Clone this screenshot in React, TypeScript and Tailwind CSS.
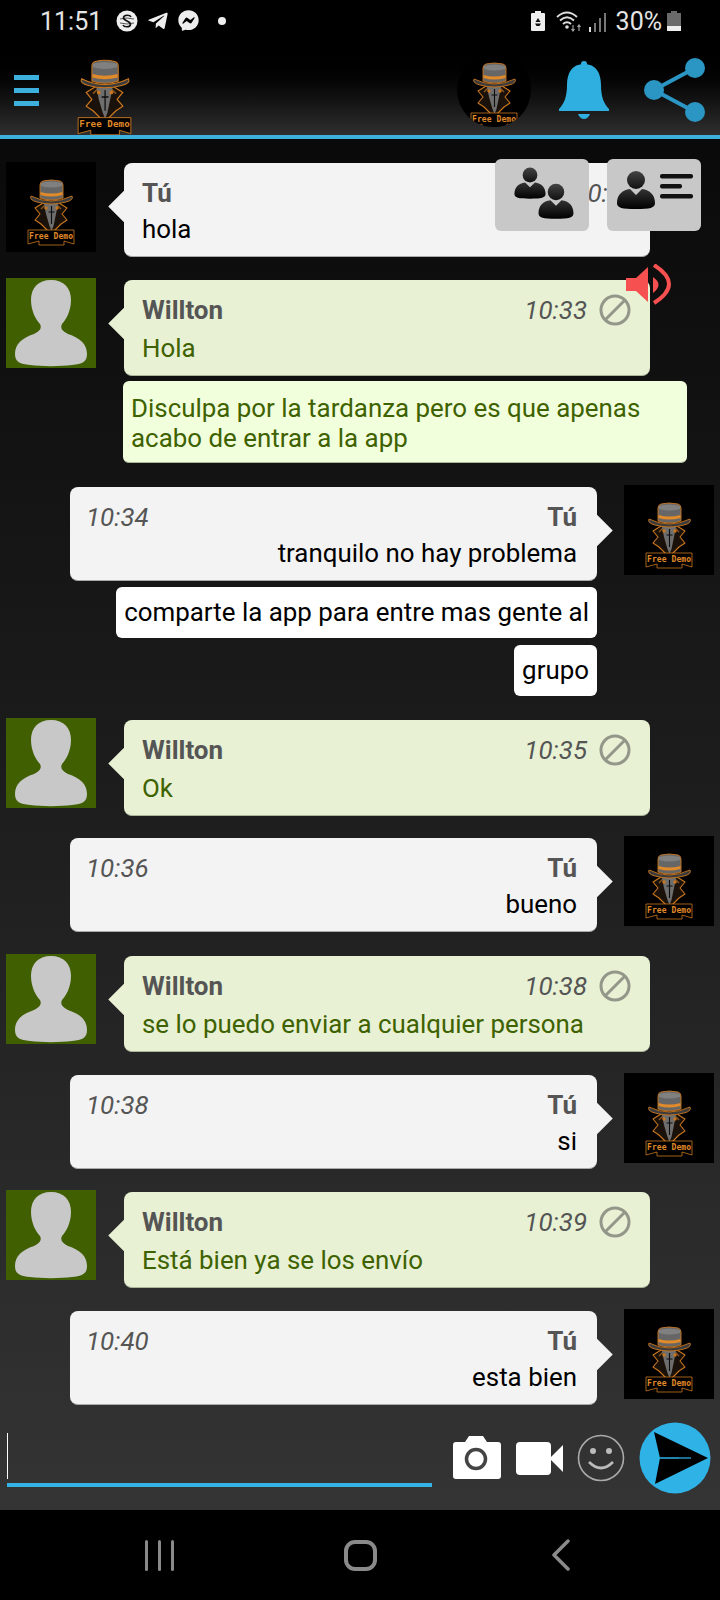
import React from "react";
import { FaTelegramPlane, FaFacebookMessenger } from "react-icons/fa";

const Logo = ({ box = "0 0 90 90", className = "" }: { box?: string; className?: string }) => (
  <svg viewBox={box} className={className}>
    <path d="M29 46 L37 41 L53 41 L61 46 L56 52 L61 58 L55 62 L47 70 L43 70 L35 62 L29 58 L34 52 Z" fill="#1a120a" stroke="#c9761f" strokeWidth="1.1" strokeLinejoin="round" />
    <path d="M35 47 L39 43 M55 47 L51 43" stroke="#8a5420" strokeWidth="1.4" />
    <path d="M38 42 L52 42 L50 52 L47.5 64 L45.5 69 L43.5 64 L40 52 Z" fill="#6e6e6e" />
    <path d="M45.5 44 L45.5 62 M42.5 50 L48.5 50" stroke="#0d0d0d" strokeWidth="1.1" />
    <circle cx="40" cy="46" r="1.7" fill="#c9761f" />
    <circle cx="51" cy="46" r="1.7" fill="#c9761f" />
    <path d="M25 34 Q45 44 66 34 Q68 38 60 40 Q45 44 31 40 Q23 38 25 34 Z" fill="#3c3c3c" stroke="#c9761f" strokeWidth="0.9" />
    <path d="M37 19 Q45 17 54 19 Q57 20 57 23 L57 36 Q45 40 34 36 L34 23 Q34 20 37 19 Z" fill="#666" stroke="#c9761f" strokeWidth="0.9" />
    <path d="M35 21 Q45 18 56 21 L56 24 Q45 27 35 24 Z" fill="#808080" />
    <path d="M34.5 30 Q45 33 56.5 30 L56.5 33 Q45 36 34.5 33 Z" fill="#e08a2a" />
    <path d="M22 68 L68 68 L68 82 L58 79 L58 83 L33 83 L33 79 L22 82 Z" fill="#000" stroke="#c9761f" strokeWidth="0.8" />
    <text x="45" y="76.5" textAnchor="middle" fontSize="8" fontWeight="700" fill="#e08a2a" fontFamily="'DejaVu Sans Mono', monospace" textLength="44">
      Free Demo
    </text>
  </svg>
);

const MeAvatar = () => (
  <div className="w-[90px] h-[90px] bg-black shrink-0">
    <Logo className="w-full h-full" />
  </div>
);

const UserAvatar = () => (
  <div className="w-[90px] h-[90px] bg-[#3f5f00] shrink-0">
    <svg viewBox="0 0 90 90" className="w-full h-full">
      <path
        d="M45 2 C32 2 25 10 25 22 C25 33 30 42 34 46 C36 50 34 53 28 56 C16 60 9 66 9 76 C9 84 14 86 24 87 C36 88.5 54 88.5 66 87 C76 86 81 84 81 76 C81 66 74 60 62 56 C56 53 54 50 56 46 C60 42 65 33 65 22 C65 10 58 2 45 2 Z"
        fill="#c8c8c8"
      />
    </svg>
  </div>
);

const Ban = () => (
  <svg viewBox="0 0 32 32" className="w-8 h-8 ml-[12px] shrink-0">
    <circle cx="16" cy="16" r="14" fill="none" stroke="#92978a" strokeWidth="3" />
    <path d="M6 26 L26 6" stroke="#92978a" strokeWidth="3" />
  </svg>
);

const Left = ({ name, time, text, className = "" }: { name: string; time: string; text: string; className?: string }) => (
  <div className={`flex pl-[6px] ${className}`}>
    <UserAvatar />
    <div className="relative ml-[28px] mt-[2px] w-[526px] h-[96px] rounded-lg bg-[#e8f1d4] border-b border-[#aab59a] pl-[18px] pr-[19px] pt-[12px]">
      <div className="absolute left-[-11px] top-[32px] w-[23px] h-[23px] rotate-45 bg-[#e8f1d4]" />
      <div className="relative flex items-center h-[36px]">
        <span className="flex-1 font-bold text-[26px] text-[#555]">{name}</span>
        <span className="italic text-[25.9px] text-[#555]">{time}</span>
        <Ban />
      </div>
      <div className="relative mt-[1px] text-[25.9px] leading-[38px] text-[#3f6200]">{text}</div>
    </div>
  </div>
);

const Right = ({ time, text, className = "" }: { time: string; text: string; className?: string }) => (
  <div className={`flex justify-end pr-[6px] ${className}`}>
    <div className="relative mt-[2px] w-[527px] h-[94px] rounded-lg bg-[#f3f3f3] border-b border-[#aaa] pl-[16px] pr-[20px] pt-[12px]">
      <div className="absolute right-[-11px] top-[32px] w-[23px] h-[23px] rotate-45 bg-[#f3f3f3]" />
      <div className="relative flex items-center justify-between h-[36px]">
        <span className="italic text-[25.9px] text-[#555]">{time}</span>
        <span className="font-bold text-[26px] text-[#555]">Tú</span>
      </div>
      <div className="relative text-right text-[25.9px] leading-[36px] text-black">{text}</div>
    </div>
    <div className="w-[27px] shrink-0" />
    <MeAvatar />
  </div>
);

const Person = ({ x, y, s }: { x: number; y: number; s: number }) => (
  <g transform={`translate(${x} ${y}) scale(${s})`}>
    <circle cx="0" cy="0" r="9" fill="url(#pg)" />
    <path d="M-6 9 L0 15 L6 9 C14 10 19 15 19 23 C19 28 14 29 0 29 C-14 29 -19 28 -19 23 C-19 15 -14 10 -6 9 Z" fill="url(#pb)" />
  </g>
);

const Defs = () => (
  <defs>
    <linearGradient id="pg" x1="0" y1="0" x2="0" y2="1">
      <stop offset="0" stopColor="#444" />
      <stop offset="1" stopColor="#111" />
    </linearGradient>
    <linearGradient id="pb" x1="0" y1="0" x2="0" y2="1">
      <stop offset="0" stopColor="#333" />
      <stop offset="1" stopColor="#000" />
    </linearGradient>
  </defs>
);

export default function App() {
  return (
    <div className="w-[720px] h-[1600px] flex flex-col bg-black overflow-hidden [font-family:Roboto,sans-serif]">
      {/* status bar */}
      <div className="h-[45px] bg-black flex items-center pl-[40px] pr-[39px] text-[#e4e4e4] shrink-0">
        <span className="text-[25px] leading-[45px] w-[76px] mt-[-2px]">11:51</span>
        <svg viewBox="0 0 22 22" className="w-[22px] h-[22px] mt-[-4px]">
          <circle cx="11" cy="11" r="10.5" fill="#eee" />
          <path d="M15 7 C14 4.5 8 4.5 7.5 7.5 C7 11 15 11 14.5 14.5 C14 17.5 8 17.5 7 15" fill="none" stroke="#111" strokeWidth="1.6" />
          <path d="M4 9 Q11 7 18 9 M4 13 Q11 15 18 13" fill="none" stroke="#111" strokeWidth="0.7" />
        </svg>
        <FaTelegramPlane className="w-[22px] h-[22px] ml-[9px] mt-[-4px] text-[#eee]" />
        <FaFacebookMessenger className="w-[21px] h-[21px] ml-[9px] mt-[-4px] text-[#eee]" />
        <div className="w-2 h-2 rounded-full bg-[#eee] ml-[19px] mt-[-4px]" />
        <div className="flex-1" />
        <svg viewBox="0 0 14 20" className="w-[14px] h-[20px] mt-[-4px]">
          <path d="M4 0 H10 V2 H13 Q14 2 14 3 V19 Q14 20 13 20 H1 Q0 20 0 19 V3 Q0 2 1 2 H4 Z" fill="#eee" />
          <path d="M7 7 L9.5 11 H4.5 Z M4 12.5 H10 L8.5 15 H5.5 Z" fill="#111" />
        </svg>
        <svg viewBox="0 0 28 22" className="w-[28px] h-[22px] ml-[11px] mt-[-4px]">
          <path d="M1 7 Q11 -2 21 7 M4 10.5 Q11 4 18 10.5 M7 14 Q11 10.5 15 14" fill="none" stroke="#ddd" strokeWidth="1.9" />
          <circle cx="11" cy="17" r="1.8" fill="#ddd" />
          <path d="M17 15 V21 M23 15 V21 M15.5 19 L17 21 L18.5 19 M21.5 17 L23 15 L24.5 17" fill="none" stroke="#aaa" strokeWidth="1.1" />
        </svg>
        <svg viewBox="0 0 18 20" className="w-[18px] h-[20px] ml-[5px] mt-[-2px]">
          <rect x="0" y="15" width="2" height="5" fill="#ddd" />
          <rect x="5" y="11" width="2" height="9" fill="#777" />
          <rect x="10" y="6" width="2" height="14" fill="#777" />
          <rect x="15" y="1" width="2" height="19" fill="#777" />
        </svg>
        <span className="text-[25px] leading-[45px] ml-[9px] mt-[-2px]">30%</span>
        <svg viewBox="0 0 14 20" className="w-[14px] h-[20px] ml-[5px] mt-[-4px]">
          <path d="M4 0 H10 V2 H14 V20 H0 V2 H4 Z" fill="#6a6a6a" />
          <rect x="0" y="15" width="14" height="5" fill="#eee" />
        </svg>
      </div>

      {/* top bar */}
      <div className="h-[90px] flex items-center shrink-0 bg-gradient-to-b from-[#000000] to-[#2f2f2f] pl-[14px] pr-[14px]">
        <div className="flex flex-col gap-[8px] w-[25px]">
          <div className="h-[5px] bg-[#3eb0dd]" />
          <div className="h-[5px] bg-[#3eb0dd]" />
          <div className="h-[5px] bg-[#3eb0dd]" />
        </div>
        <Logo box="21 17 48 66" className="w-[55px] h-[76px] ml-[38px] mt-[14px]" />
        <div className="flex-1" />
        <div className="w-[74px] h-[74px] rounded-full bg-black overflow-hidden">
          <Logo box="8 8 74 74" className="w-full h-full" />
        </div>
        <svg viewBox="0 0 50 58" className="w-[50px] h-[58px] ml-[28px]">
          <circle cx="25" cy="3" r="3" fill="#2fafe0" />
          <path d="M25 3 C13 3 8 12 8 24 C8 36 5 43 0 48 L0 50 H50 V48 C45 43 42 36 42 24 C42 12 37 3 25 3 Z" fill="#2fafe0" />
          <path d="M19 53 H31 Q29 58 25 58 Q21 58 19 53 Z" fill="#2fafe0" />
        </svg>
        <svg viewBox="0 0 62 64" className="w-[62px] h-[64px] ml-[35px]">
          <path d="M10 32 L51 10 M10 32 L51 54" stroke="#2b95c3" strokeWidth="4" />
          <circle cx="51" cy="10" r="10" fill="#2b95c3" />
          <circle cx="10" cy="32" r="10" fill="#2b95c3" />
          <circle cx="51" cy="54" r="10" fill="#2b95c3" />
        </svg>
      </div>
      <div className="h-[4px] bg-[#3eb0dd] shrink-0" />

      {/* chat */}
      <div className="relative flex-1 flex flex-col bg-gradient-to-b from-[#0a0a0a] to-[#343434]">
        <div className="flex flex-col pt-[23px]">
          <div className="flex pl-[6px]">
            <MeAvatar />
            <div className="relative ml-[28px] mt-[1px] w-[526px] h-[94px] rounded-lg bg-[#f3f3f3] border-b border-[#aaa] pl-[18px] pr-[14px] pt-[12px]">
              <div className="absolute left-[-11px] top-[32px] w-[23px] h-[23px] rotate-45 bg-[#f3f3f3]" />
              <div className="relative flex items-center justify-between h-[36px]">
                <span className="font-bold text-[26px] text-[#555]">Tú</span>
                <span className="italic text-[25.9px] text-[#555]">10:32</span>
              </div>
              <div className="relative mt-[-1px] text-[25.9px] leading-[38px] text-black">hola</div>
            </div>
          </div>

          <Left className="mt-[21px]" name="Willton" time="10:33" text="Hola" />
          <div className="ml-[123px] mt-[5px] w-[564px] h-[82px] rounded-md bg-[#f2ffdc] border-b border-[#aab59a] px-[8px] pt-[12px] text-[25.9px] leading-[30px] text-[#3f6200]">
            Disculpa por la tardanza pero es que apenas
            <br />
            acabo de entrar a la app
          </div>

          <Right className="mt-[22px]" time="10:34" text="tranquilo no hay problema" />
          <div className="self-end mr-[123px] mt-[6px] h-[51px] rounded-md bg-white px-[8px] text-[25.9px] leading-[51px] text-black">
            comparte la app para entre mas gente al
          </div>
          <div className="self-end mr-[123px] mt-[7px] h-[51px] rounded-md bg-white px-[8px] text-[25.9px] leading-[51px] text-black">
            grupo
          </div>

          <Left className="mt-[22px]" name="Willton" time="10:35" text="Ok" />
          <Right className="mt-[20px]" time="10:36" text="bueno" />
          <Left className="mt-[22px]" name="Willton" time="10:38" text="se lo puedo enviar a cualquier persona" />
          <Right className="mt-[21px]" time="10:38" text="si" />
          <Left className="mt-[21px]" name="Willton" time="10:39" text="Está bien ya se los envío" />
          <Right className="mt-[21px]" time="10:40" text="esta bien" />
        </div>

        {/* input row */}
        <div className="flex items-start pl-[7px] mt-[28px]">
          <div className="w-[425px] shrink-0">
            <div className="w-[1px] h-[46px] bg-white" />
            <div className="h-[4px] mt-[4px] bg-[#35b2e5]" />
          </div>
          <svg viewBox="0 0 48 43" className="w-[48px] h-[43px] ml-[21px] mt-[3px]">
            <path d="M3 6 H12 L16 0 H30 L34 6 H45 Q48 6 48 9 V40 Q48 43 45 43 H3 Q0 43 0 40 V9 Q0 6 3 6 Z" fill="#fff" />
            <circle cx="23" cy="23" r="9.5" fill="none" stroke="#444" strokeWidth="3.5" />
          </svg>
          <svg viewBox="0 0 47 33" className="w-[47px] h-[33px] ml-[15px] mt-[9px]">
            <rect x="0" y="0" width="35" height="33" rx="4" fill="#fff" />
            <path d="M35 15 L47 3 V30 L35 18 Z" fill="#fff" />
          </svg>
          <svg viewBox="0 0 48 48" className="w-[48px] h-[48px] ml-[14px] mt-[1px]">
            <circle cx="24" cy="24" r="22.5" fill="none" stroke="#aaa" strokeWidth="1.6" />
            <circle cx="16" cy="17" r="3" fill="#bbb" />
            <circle cx="32" cy="17" r="3" fill="#bbb" />
            <path d="M12 28 Q24 40 36 28" fill="none" stroke="#bbb" strokeWidth="2.6" />
          </svg>
          <svg viewBox="0 0 72 72" className="w-[72px] h-[72px] ml-[14px] mt-[-11px]">
            <circle cx="36" cy="36" r="35.5" fill="#2fb2e6" />
            <path d="M15 10 L69 36 L16 62 L21 36 Z" fill="#000" />
            <path d="M21 36 H40" stroke="#2fb2e6" strokeWidth="1.5" />
            <path d="M40 36 H52" stroke="#1d6f8f" strokeWidth="2" />
          </svg>
        </div>

        {/* overlay buttons */}
        <div className="absolute left-[495px] top-[20px] w-[94px] h-[72px] rounded-md bg-[#c8c8c8]">
          <svg viewBox="0 0 94 72" className="w-full h-full">
            <Defs />
            <Person x={35} y={16} s={0.82} />
            <Person x={61} y={33} s={0.92} />
          </svg>
        </div>
        <div className="absolute left-[607px] top-[20px] w-[94px] h-[72px] rounded-md bg-[#c8c8c8]">
          <svg viewBox="0 0 94 72" className="w-full h-full">
            <Defs />
            <Person x={29} y={21} s={1} />
            <rect x="53" y="15" width="33" height="4.5" rx="2" fill="#111" />
            <rect x="53" y="25" width="22" height="4.5" rx="2" fill="#111" />
            <rect x="53" y="35" width="33" height="4.5" rx="2" fill="#111" />
          </svg>
        </div>
        <svg viewBox="0 0 46 42" className="absolute left-[626px] top-[125px] w-[46px] h-[42px]">
          <path d="M0 14 H10 L22 3 V38 L10 27 H0 Z" fill="#f65050" />
          <path d="M27 13 Q38 20.5 27 29 Z" fill="#f65050" />
          <path d="M28 1 Q58 20 28 39" fill="none" stroke="#f65050" strokeWidth="4" />
        </svg>
      </div>

      {/* android nav */}
      <div className="h-[90px] bg-black flex items-center pl-[119px] gap-[121px] shrink-0">
        <div className="w-[80px] flex justify-center gap-[10px]">
          <div className="w-[3px] h-[31px] rounded-sm bg-[#8a8a8a]" />
          <div className="w-[3px] h-[31px] rounded-sm bg-[#8a8a8a]" />
          <div className="w-[3px] h-[31px] rounded-sm bg-[#8a8a8a]" />
        </div>
        <div className="w-[80px] flex justify-center">
          <div className="w-[33px] h-[31px] rounded-[11px] border-[4px] border-[#8a8a8a]" />
        </div>
        <div className="w-[80px] flex justify-center">
          <svg viewBox="0 0 20 32" className="w-[20px] h-[32px]">
            <path d="M17 2 L3 16 L17 30" fill="none" stroke="#8a8a8a" strokeWidth="3.5" strokeLinecap="round" strokeLinejoin="round" />
          </svg>
        </div>
      </div>
    </div>
  );
}
